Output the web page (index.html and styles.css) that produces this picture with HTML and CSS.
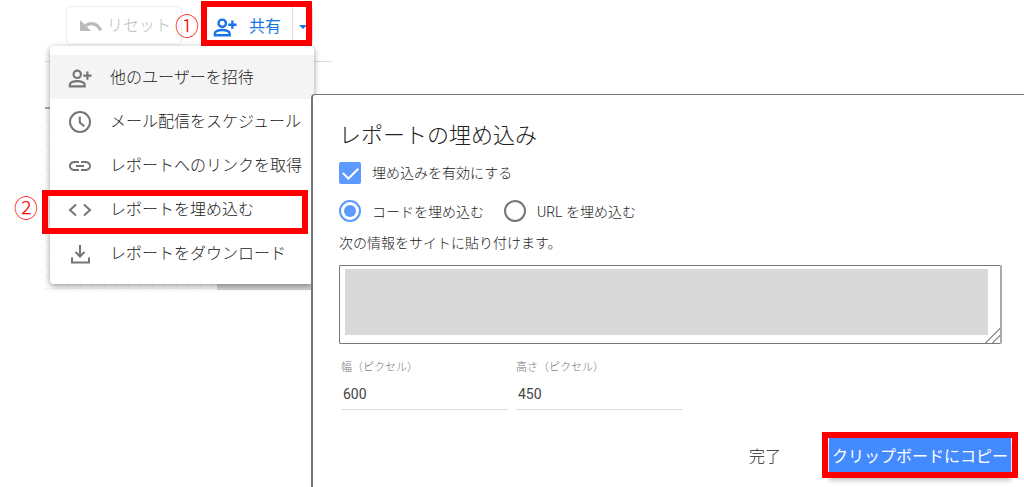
FILE: index.html
```
<!DOCTYPE html>
<html lang="ja">
<head>
<meta charset="utf-8">
<title>レポートの埋め込み</title>
<link rel="stylesheet" href="styles.css">
</head>
<body>
<div class="page">
  <div class="editor">
    <header class="toolbar">
      <button class="tool tool-reset" type="button" disabled>
        <svg class="icon" viewBox="0 0 24 24" aria-hidden="true"><path fill="currentColor" d="M12.5 8c-2.65 0-5.05.99-6.9 2.600L1 6v11h11l-4-4c1.390-1.160 2.800-1.800 4.500-1.800 3.540 0 6.200 2.100 7.600 5.800l3-1C21.400 11.400 17.150 8 12.500 8z"/></svg>
        リセット
      </button>
      <div class="share">
        <button class="tool tool-share" type="button">
          <svg class="icon" viewBox="0 0 26 24" aria-hidden="true"><g fill="none" stroke="currentColor" stroke-width="2.6"><circle cx="10" cy="8" r="4"/><path d="M2 21v-2c0-2.300 4-3.700 8-3.700s8 1.400 8 3.700v2z"/><path d="M21 5v9M16.500 9.500h9"/></g></svg>
          共有
        </button>
        <button class="tool tool-caret" type="button" aria-label="共有オプション"><span class="caret"></span></button>
        <span class="frame frame-share"></span>
      </div>
      <span class="marker marker-one">①</span>
    </header>
    <div class="canvas">
      <div class="canvas-head"></div>
      <div class="canvas-grid"><div class="canvas-shade"></div></div>
    </div>
    <nav class="menu">
      <button class="item item-active" type="button">
        <svg class="icon" viewBox="0 0 26 24" aria-hidden="true"><g fill="none" stroke="currentColor" stroke-width="2.4"><circle cx="10" cy="8" r="4"/><path d="M2 21v-2c0-2.300 4-3.700 8-3.700s8 1.400 8 3.700v2z"/><path d="M21 5v9M16.500 9.500h9"/></g></svg>
        他のユーザーを招待
      </button>
      <button class="item" type="button">
        <svg class="icon" viewBox="0 0 24 24" aria-hidden="true"><g fill="none" stroke="currentColor" stroke-width="2"><circle cx="12" cy="12" r="10"/><path d="M11.800 6.500v6l4.500 3.700"/></g></svg>
        メール配信をスケジュール
      </button>
      <button class="item" type="button">
        <svg class="icon" viewBox="0 0 24 24" aria-hidden="true"><path fill="currentColor" d="M2.900 12c0-1.710 1.390-3.100 3.600-3.100h4.500V7H6.500C3.240 7 1 9.240 1 12s2.240 5 5.500 5H11v-1.900H6.500C4.290 15.100 2.900 13.710 2.900 12zM8 13h8v-2H8v2zm9.500-6H13v1.900h4.500c2.210 0 3.600 1.390 3.600 3.100s-1.390 3.100-3.600 3.100H13V17h4.500c3.260 0 5.500-2.240 5.500-5s-2.240-5-5.500-5z"/></svg>
        レポートへのリンクを取得
      </button>
      <button class="item" type="button">
        <svg class="icon" viewBox="0 0 24 24" aria-hidden="true"><path fill="none" stroke="currentColor" stroke-width="2" d="M8 6.500L2 12l6 5.500M16 6.500l6 5.500-6 5.500"/></svg>
        レポートを埋め込む
        <span class="frame frame-item"></span>
        <span class="marker marker-two">②</span>
      </button>
      <button class="item" type="button">
        <svg class="icon" viewBox="0 0 24 24" aria-hidden="true"><path fill="none" stroke="currentColor" stroke-width="2" d="M12 3v11M7.500 10l4.500 4.500 4.500-4.500M4 15.500v5h17v-5"/></svg>
        レポートをダウンロード
      </button>
    </nav>
  </div>

  <main class="dialog" role="dialog" aria-labelledby="dialog-title">
    <h1 class="title" id="dialog-title">レポートの埋め込み</h1>
    <label class="choice choice-enable"><input class="check" type="checkbox" checked>埋め込みを有効にする</label>
    <div class="radios">
      <label class="choice"><input class="radio" type="radio" name="kind" checked>コードを埋め込む</label>
      <label class="choice"><input class="radio" type="radio" name="kind">URL を埋め込む</label>
    </div>
    <label class="hint" for="code">次の情報をサイトに貼り付けます。</label>
    <textarea class="code" id="code"></textarea>
    <div class="sizes">
      <div class="field"><label for="width">幅（ピクセル）</label><input id="width" type="text" value="600"></div>
      <div class="field"><label for="height">高さ（ピクセル）</label><input id="height" type="text" value="450"></div>
    </div>
    <div class="actions">
      <button class="done" type="button">完了</button>
      <button class="copy" type="button">クリップボードにコピー<span class="frame frame-copy"></span></button>
    </div>
  </main>
</div>
</body>
</html>
```
FILE: styles.css
```
* { box-sizing: border-box; }

body {
  margin: 0;
  background: #fff;
  color: #222;
  font-family: Roboto, "Noto Sans CJK JP", sans-serif;
  font-size: 14px;
  font-weight: 300;
}

button, input, textarea {
  font: inherit;
  color: inherit;
  margin: 0;
}

button {
  border: 0;
  background: none;
  padding: 0;
}

.page {
  display: grid;
  grid-template-columns: 311px 1fr;
  min-height: 100vh;
}

.editor { position: relative; }

.icon { width: 24px; height: 24px; flex: none; }

/* Toolbar */
.toolbar {
  position: relative;
  display: flex;
  gap: 22px;
  height: 62px;
  margin: 0 -21px 0 45px;
  padding: 6px 0 0 21px;
  border-bottom: 1px solid #ddd;
}

.tool {
  display: flex;
  align-items: center;
  height: 39px;
  font-size: 16px;
  white-space: nowrap;
}

.tool .icon { margin-top: 4px; }

.tool-reset {
  width: 116px;
  gap: 4px;
  padding: 0 0 4px 12px;
  border: 1px solid #eee;
  border-radius: 4px;
  color: #bbb;
}

.share {
  position: relative;
  display: flex;
  border: 1px solid #ddd;
  border-radius: 4px;
  height: 39px;
  color: #1a73e8;
}

.tool-share {
  width: 87px;
  gap: 12px;
  padding: 0 0 4px 8px;
  font-weight: 400;
}

.tool-caret {
  width: 20px;
  justify-content: center;
  border-left: 1px solid #ddd;
}

.caret {
  border: 4px solid transparent;
  border-top-color: currentColor;
  border-bottom: 0;
}

/* Red call-outs */
.frame {
  position: absolute;
  border: 6px solid #f00;
  pointer-events: none;
}

.frame-share { inset: -6px 0 -2px -4px; }
.frame-item { inset: 3px 6px -3px -8px; }
.frame-copy { inset: -6px -7px; }

.marker {
  position: absolute;
  color: #f00;
  font-family: "Noto Sans CJK JP", sans-serif;
  font-size: 24px;
  line-height: 24px;
}

.marker-one { left: 130px; top: 13px; }
.marker-two { left: -36px; top: 8px; }

/* Report canvas behind the menu */
.canvas { margin-left: 45px; }

.canvas-head {
  height: 47px;
  border-bottom: 2px solid #aaa;
}

.canvas-grid {
  display: flex;
  justify-content: flex-end;
  height: 181px;
  background:
    repeating-linear-gradient(#0000 0 11px, #f4f4f4 11px 12px),
    repeating-linear-gradient(90deg, #0000 0 11px, #f4f4f4 11px 12px);
}

.canvas-shade { width: 94px; background: #d5d5d5; }

/* Share menu */
.menu {
  position: absolute;
  top: 46px;
  left: 50px;
  width: 264px;
  padding: 9px 0;
  border-radius: 4px;
  background: #fff;
  box-shadow: 0 2px 6px #0006;
}

.item {
  position: relative;
  display: flex;
  align-items: center;
  gap: 18px;
  width: 100%;
  height: 44px;
  padding: 0 0 3px 18px;
  font-size: 16px;
  white-space: nowrap;
}

.item-active { background: #f4f4f4; }
.item .icon { margin-top: 4px; color: #757575; }

/* Embed dialog */
.dialog {
  position: relative;
  margin-top: 94px;
  padding: 25px 22px 0 26px;
  border: solid #777;
  border-width: 1px 0 0 2px;
  border-radius: 4px 0 0 0;
  background: #fff;
}

.title {
  margin: 0 0 9px;
  font-size: 22px;
  font-weight: 300;
  line-height: 32px;
}

.choice {
  display: flex;
  align-items: center;
  gap: 11px;
  height: 24px;
}

.choice-enable { padding-bottom: 2px; }
.choice-enable .check { margin-top: 2px; }

.check, .radio {
  appearance: none;
  flex: none;
  display: grid;
  place-items: center;
  width: 22px;
  height: 22px;
}

.check { border-radius: 2px; background: #5c9aff; }

.check::after {
  content: "";
  width: 7px;
  height: 13px;
  margin-bottom: 3px;
  border: solid #fff;
  border-width: 0 2px 2px 0;
  rotate: 45deg;
}

.radio { border: 2px solid #757575; border-radius: 50%; }
.radio:checked { border-color: #5c9aff; }

.radio:checked::after {
  content: "";
  width: 12px;
  height: 12px;
  border-radius: 50%;
  background: #5c9aff;
}

.radios { display: flex; gap: 20px; margin: 14px 0 8px; }

.hint { display: block; line-height: 24px; }

.code {
  display: block;
  width: 100%;
  height: 79px;
  margin-top: 10px;
  padding: 3px 12px 8px 5px;
  border: 1px solid #777;
  border-right: 2px solid #aaa;
  border-radius: 2px;
  background: #d9d9d9 content-box;
}

.code::-webkit-resizer {
  background: linear-gradient(135deg, #0000 48%, #999 48% 55%, #0000 55% 72%, #999 72% 79%, #0000 79%);
}

.sizes { display: flex; gap: 8px; margin: 14px 0 0 2px; }
.field { width: 167px; }

.field label {
  display: block;
  color: #777;
  font-size: 11px;
  line-height: 20px;
}

.field input {
  display: block;
  width: 100%;
  height: 32px;
  padding: 0 2px;
  border: 0;
  border-bottom: 1px solid #ddd;
  background: none;
  color: #444;
  font-weight: 400;
}

.actions {
  display: flex;
  justify-content: flex-end;
  align-items: center;
  gap: 48px;
  margin: 28px -9px 0 0;
}

.done { font-size: 16px; }

.copy {
  position: relative;
  width: 182px;
  height: 34px;
  background: #448aff;
  box-shadow: 0 8px 5px #0004;
  color: #fff;
  font-size: 16px;
  font-weight: 400;
  white-space: nowrap;
}
```
